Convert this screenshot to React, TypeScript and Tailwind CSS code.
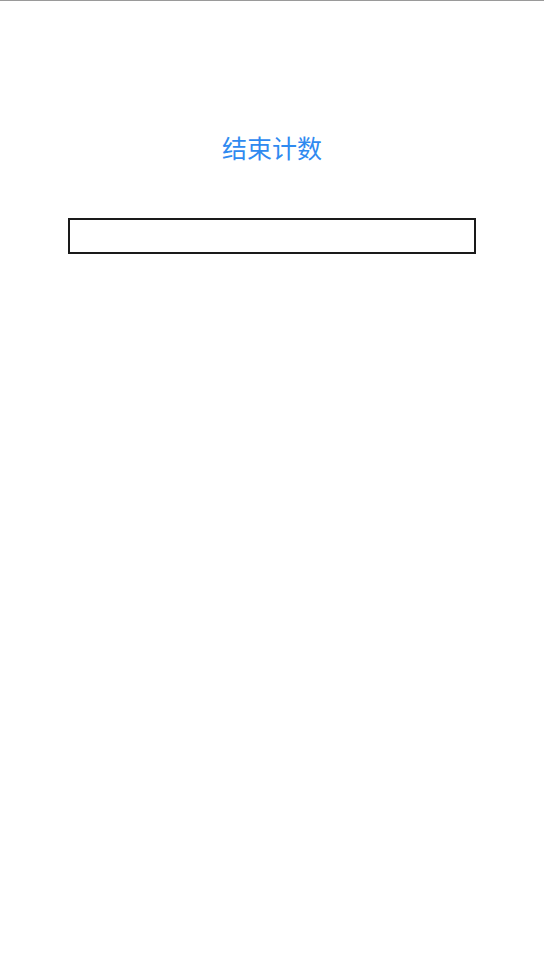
export default function App() {
  return (
    <div
      className="min-h-[966px] w-full bg-white border-t border-[#9a9a9a]"
      style={{ fontFamily: '"Noto Sans CJK SC", "Noto Sans", sans-serif' }}
    >
      <div className="pt-[126px] flex flex-col items-center">
        <h1 className="text-[25px] leading-[40px] text-[#2f8af0] font-normal">结束计数</h1>
        <div className="mt-[51px] w-[408px] h-[36px] border-2 border-[#1a1a1a]" />
      </div>
    </div>
  );
}
